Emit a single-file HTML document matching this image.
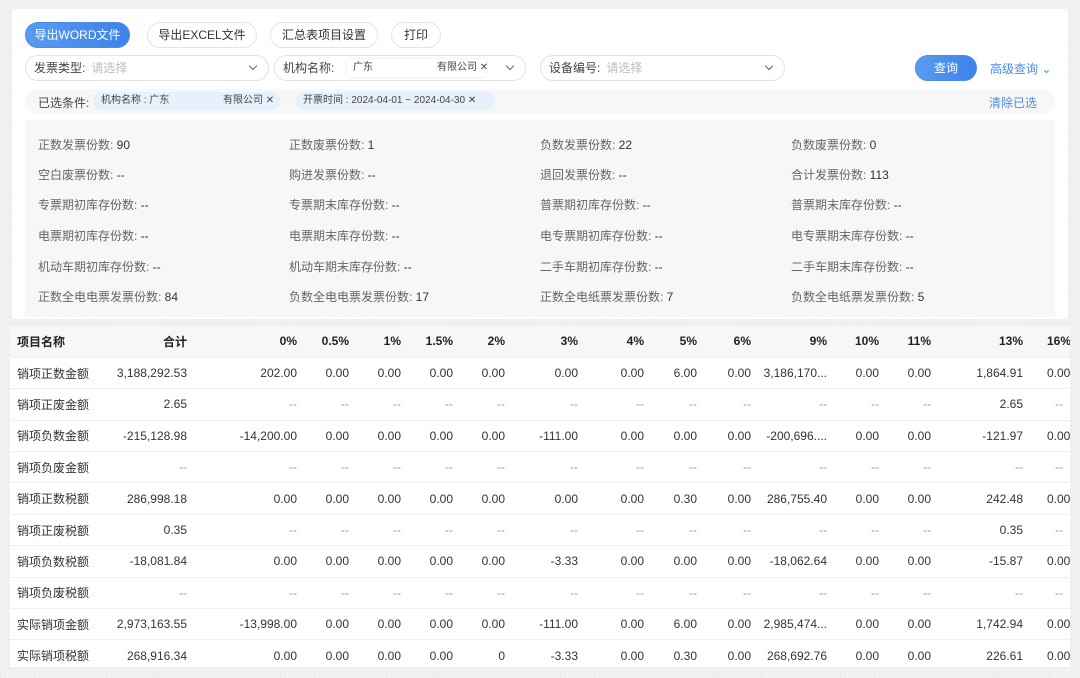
<!DOCTYPE html>
<html><head><meta charset="utf-8"><style>
*{box-sizing:border-box;margin:0;padding:0}
body{width:1080px;height:678px;overflow:hidden;font-family:"Liberation Sans","Noto Sans CJK SC",sans-serif;font-size:12px;color:#333;
background:repeating-linear-gradient(135deg,#f3f3f3 0 2px,#e9e9e9 2px 3px);position:relative;white-space:nowrap}
.card{position:absolute;left:12px;top:9px;width:1056px;height:310px;background:#fff}
.btn{position:absolute;top:22px;height:26px;border:1px solid #e3e3e3;border-radius:13px;background:#fff;font-size:12px;line-height:24px;text-align:center;color:#333}
.btn.pri{background:linear-gradient(90deg,#5a9bf0,#3d82ea);color:#fff;border-color:#4a8cec}
.sel{position:absolute;top:55px;height:26px;border:1px solid #e3e3e3;border-radius:13px;background:#fff;line-height:24px;padding-left:8px;font-size:12px;color:#444}
.sel .ph{color:#bbb;margin-left:6px}
.sel .ar{position:absolute;right:12px;top:7px;width:6px;height:6px;border-right:1.3px solid #666;border-bottom:1.3px solid #666;transform:rotate(45deg)}
.tag{position:absolute;height:18px;top:92px;background:#e6f1fd;border-radius:9px;font-size:10px;line-height:18px;color:#444;padding-left:8px}
.cond{position:absolute;left:25px;top:89px;width:1030px;height:25px;background:#f7f7f7;border-radius:12px}
.stats{position:absolute;left:25px;top:120px;width:1030px;height:197px;background:#f7f7f7}
.st{position:absolute;font-size:12px;color:#666}
.st b{font-weight:normal;color:#333}
.tbl{position:absolute;left:10px;top:326px;width:1060px;height:341px;background:#fff;overflow:hidden}
table{border-collapse:collapse;table-layout:fixed;width:1081px}
td,th{height:31.4px;text-align:right;padding-right:8px;white-space:nowrap;overflow:hidden;font-size:12px;border-bottom:1px solid #f0f0f0}
th{background:#f7f7f7;font-weight:bold;color:#222}
td:first-child,th:first-child{text-align:left;padding-left:7px}
td{color:#333}
.d{color:#999}
.l{text-align:left!important;padding-left:16px}
</style></head><body>
<div class="card"></div>
<div class="btn pri" style="left:25px;width:105px">导出WORD文件</div>
<div class="btn" style="left:147px;width:110px">导出EXCEL文件</div>
<div class="btn" style="left:270px;width:108px">汇总表项目设置</div>
<div class="btn" style="left:391px;width:50px">打印</div>
<div class="sel" style="left:25px;width:244px">发票类型:<span class="ph">请选择</span><i class="ar"></i></div>
<div class="sel" style="left:274px;width:252px">机构名称:<span style="display:inline-block;position:absolute;left:72px;top:3px;width:140px;height:18px;background:#fff;box-shadow:0 0 2px #ddd;font-size:10px;line-height:18px;padding-left:6px">广东<span style="position:absolute;left:90px">有限公司 ✕</span></span><i class="ar"></i></div>
<div class="sel" style="left:540px;width:245px">设备编号:<span class="ph">请选择</span><i class="ar"></i></div>
<div class="btn pri" style="left:915px;top:55px;width:62px">查询</div>
<div style="position:absolute;left:990px;top:60px;color:#4a8cec;font-size:12px">高级查询 ⌄</div>
<div class="cond"></div>
<div style="position:absolute;left:38px;top:94px;font-size:12px;color:#444">已选条件:</div>
<div class="tag" style="left:93px;width:188px">机构名称 : 广东<span style="position:absolute;left:130px">有限公司 ✕</span></div>
<div class="tag" style="left:295px;width:200px">开票时间 : 2024-04-01 ~ 2024-04-30 ✕</div>
<div style="position:absolute;left:989px;top:94px;color:#4a8cec;font-size:12px">清除已选</div>
<div class="stats"></div>
<div class="st" style="left:38px;top:136px">正数发票份数: <b>90</b></div>
<div class="st" style="left:289px;top:136px">正数废票份数: <b>1</b></div>
<div class="st" style="left:540px;top:136px">负数发票份数: <b>22</b></div>
<div class="st" style="left:791px;top:136px">负数废票份数: <b>0</b></div>
<div class="st" style="left:38px;top:166px">空白废票份数: <b>--</b></div>
<div class="st" style="left:289px;top:166px">购进发票份数: <b>--</b></div>
<div class="st" style="left:540px;top:166px">退回发票份数: <b>--</b></div>
<div class="st" style="left:791px;top:166px">合计发票份数: <b>113</b></div>
<div class="st" style="left:38px;top:196px">专票期初库存份数: <b>--</b></div>
<div class="st" style="left:289px;top:196px">专票期末库存份数: <b>--</b></div>
<div class="st" style="left:540px;top:196px">普票期初库存份数: <b>--</b></div>
<div class="st" style="left:791px;top:196px">普票期末库存份数: <b>--</b></div>
<div class="st" style="left:38px;top:227px">电票期初库存份数: <b>--</b></div>
<div class="st" style="left:289px;top:227px">电票期末库存份数: <b>--</b></div>
<div class="st" style="left:540px;top:227px">电专票期初库存份数: <b>--</b></div>
<div class="st" style="left:791px;top:227px">电专票期末库存份数: <b>--</b></div>
<div class="st" style="left:38px;top:258px">机动车期初库存份数: <b>--</b></div>
<div class="st" style="left:289px;top:258px">机动车期末库存份数: <b>--</b></div>
<div class="st" style="left:540px;top:258px">二手车期初库存份数: <b>--</b></div>
<div class="st" style="left:791px;top:258px">二手车期末库存份数: <b>--</b></div>
<div class="st" style="left:38px;top:288px">正数全电电票发票份数: <b>84</b></div>
<div class="st" style="left:289px;top:288px">负数全电电票发票份数: <b>17</b></div>
<div class="st" style="left:540px;top:288px">正数全电纸票发票份数: <b>7</b></div>
<div class="st" style="left:791px;top:288px">负数全电纸票发票份数: <b>5</b></div>
<div class="tbl"><table>
<colgroup><col style="width:95px"><col style="width:90px"><col style="width:110px"><col style="width:52px"><col style="width:52px"><col style="width:52px"><col style="width:52px"><col style="width:73px"><col style="width:66px"><col style="width:53px"><col style="width:54px"><col style="width:76px"><col style="width:52px"><col style="width:52px"><col style="width:92px"><col style="width:60px"></colgroup>
<tr><th>项目名称</th><th>合计</th><th>0%</th><th>0.5%</th><th>1%</th><th>1.5%</th><th>2%</th><th>3%</th><th>4%</th><th>5%</th><th>6%</th><th>9%</th><th>10%</th><th>11%</th><th>13%</th><th class="l">16%</th></tr>
<tr><td>销项正数金额</td><td>3,188,292.53</td><td>202.00</td><td>0.00</td><td>0.00</td><td>0.00</td><td>0.00</td><td>0.00</td><td>0.00</td><td>6.00</td><td>0.00</td><td>3,186,170...</td><td>0.00</td><td>0.00</td><td>1,864.91</td><td class="l">0.00</td></tr>
<tr><td>销项正废金额</td><td>2.65</td><td class="d">--</td><td class="d">--</td><td class="d">--</td><td class="d">--</td><td class="d">--</td><td class="d">--</td><td class="d">--</td><td class="d">--</td><td class="d">--</td><td class="d">--</td><td class="d">--</td><td class="d">--</td><td>2.65</td><td class="d l" style="padding-left:24px">--</td></tr>
<tr><td>销项负数金额</td><td>-215,128.98</td><td>-14,200.00</td><td>0.00</td><td>0.00</td><td>0.00</td><td>0.00</td><td>-111.00</td><td>0.00</td><td>0.00</td><td>0.00</td><td>-200,696....</td><td>0.00</td><td>0.00</td><td>-121.97</td><td class="l">0.00</td></tr>
<tr><td>销项负废金额</td><td class="d">--</td><td class="d">--</td><td class="d">--</td><td class="d">--</td><td class="d">--</td><td class="d">--</td><td class="d">--</td><td class="d">--</td><td class="d">--</td><td class="d">--</td><td class="d">--</td><td class="d">--</td><td class="d">--</td><td class="d">--</td><td class="d l" style="padding-left:24px">--</td></tr>
<tr><td>销项正数税额</td><td>286,998.18</td><td>0.00</td><td>0.00</td><td>0.00</td><td>0.00</td><td>0.00</td><td>0.00</td><td>0.00</td><td>0.30</td><td>0.00</td><td>286,755.40</td><td>0.00</td><td>0.00</td><td>242.48</td><td class="l">0.00</td></tr>
<tr><td>销项正废税额</td><td>0.35</td><td class="d">--</td><td class="d">--</td><td class="d">--</td><td class="d">--</td><td class="d">--</td><td class="d">--</td><td class="d">--</td><td class="d">--</td><td class="d">--</td><td class="d">--</td><td class="d">--</td><td class="d">--</td><td>0.35</td><td class="d l" style="padding-left:24px">--</td></tr>
<tr><td>销项负数税额</td><td>-18,081.84</td><td>0.00</td><td>0.00</td><td>0.00</td><td>0.00</td><td>0.00</td><td>-3.33</td><td>0.00</td><td>0.00</td><td>0.00</td><td>-18,062.64</td><td>0.00</td><td>0.00</td><td>-15.87</td><td class="l">0.00</td></tr>
<tr><td>销项负废税额</td><td class="d">--</td><td class="d">--</td><td class="d">--</td><td class="d">--</td><td class="d">--</td><td class="d">--</td><td class="d">--</td><td class="d">--</td><td class="d">--</td><td class="d">--</td><td class="d">--</td><td class="d">--</td><td class="d">--</td><td class="d">--</td><td class="d l" style="padding-left:24px">--</td></tr>
<tr><td>实际销项金额</td><td>2,973,163.55</td><td>-13,998.00</td><td>0.00</td><td>0.00</td><td>0.00</td><td>0.00</td><td>-111.00</td><td>0.00</td><td>6.00</td><td>0.00</td><td>2,985,474...</td><td>0.00</td><td>0.00</td><td>1,742.94</td><td class="l">0.00</td></tr>
<tr><td>实际销项税额</td><td>268,916.34</td><td>0.00</td><td>0.00</td><td>0.00</td><td>0.00</td><td>0</td><td>-3.33</td><td>0.00</td><td>0.30</td><td>0.00</td><td>268,692.76</td><td>0.00</td><td>0.00</td><td>226.61</td><td class="l">0.00</td></tr>
</table></div>
</body></html>
